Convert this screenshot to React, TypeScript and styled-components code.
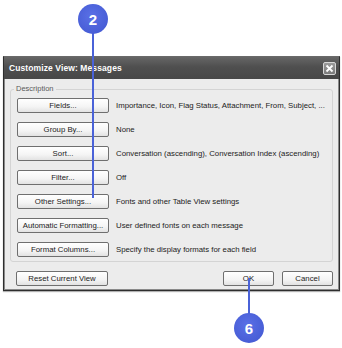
import styled, { createGlobalStyle } from 'styled-components';

const GlobalStyle = createGlobalStyle`
  html, body {
    margin: 0;
    padding: 0;
    background: #fff;
  }
  body {
    font-family: 'Liberation Sans', Arial, sans-serif;
  }
`;

const Page = styled.div`
  position: relative;
  width: 342px;
  height: 348px;
  padding: 56px 2px 0 3px;
  box-sizing: border-box;
  overflow: hidden;
`;

const Dialog = styled.div`
  width: 337px;
  height: 235px;
  box-sizing: border-box;
  border: 1px solid #2e2e2e;
  border-top-color: #6a6a6a;
  background: #ececec;
  display: flex;
  flex-direction: column;
  box-shadow: inset 0 0 0 1px #8a8a8a, 0 1px 1px rgba(0, 0, 0, 0.3);
`;

const TitleBar = styled.div`
  height: 22px;
  display: flex;
  align-items: center;
  justify-content: space-between;
  padding: 0 3px 0 5px;
  background: linear-gradient(#666, #4f4f4f 45%, #474747);
  color: #fff;
`;

const Title = styled.span`
  font-weight: 700;
  font-size: 8.5px;
  letter-spacing: 0.1px;
`;

const CloseBox = styled.div`
  width: 13px;
  height: 13px;
  box-sizing: border-box;
  border: 1px solid #d8d8d8;
  border-radius: 2px;
  background: linear-gradient(#9a9a9a, #7c7c7c);
  display: flex;
  align-items: center;
  justify-content: center;
`;

const Body = styled.div`
  flex: 1;
  display: flex;
  flex-direction: column;
  padding: 10px 6px 0 6px;
`;

const Group = styled.div`
  position: relative;
  height: 173px;
  box-sizing: border-box;
  border: 1px solid #d4d4d4;
  border-radius: 3px;
  padding: 8px 6px 0 6px;
  display: flex;
  flex-direction: column;
  gap: 9px;
`;

const Legend = styled.span`
  position: absolute;
  top: -6px;
  left: 3px;
  padding: 0 2px;
  background: #ececec;
  color: #5a5a5a;
  font-size: 7.5px;
`;

const Row = styled.div`
  display: flex;
  align-items: center;
  gap: 7px;
`;

const Button = styled.div<{ $w?: number }>`
  width: ${(p) => p.$w ?? 92}px;
  height: 15px;
  box-sizing: border-box;
  border: 1px solid #6f6f6f;
  border-radius: 2px;
  background: linear-gradient(#ffffff, #f4f4f4 60%, #e2e2e2);
  display: flex;
  align-items: center;
  justify-content: center;
  font-size: 7.8px;
  color: #222;
  flex-shrink: 0;
`;

const Desc = styled.span`
  font-size: 7.8px;
  color: #222;
  white-space: nowrap;
`;

const Footer = styled.div`
  display: flex;
  align-items: center;
  margin-top: 9px;
  padding-left: 6px;
  gap: 8px;
`;

const Spacer = styled.div`
  flex: 1;
`;

const Leader = styled.div<{ $x: number; $top: number; $h: number }>`
  position: absolute;
  left: ${(p) => p.$x}px;
  top: ${(p) => p.$top}px;
  width: 2px;
  height: ${(p) => p.$h}px;
  background: #4a62d8;
`;

const Bubble = styled.div<{ $cx: number; $cy: number }>`
  position: absolute;
  left: ${(p) => p.$cx - 15}px;
  top: ${(p) => p.$cy - 15}px;
  width: 30px;
  height: 30px;
  border-radius: 50%;
  background: radial-gradient(circle at 45% 40%, #5a70e6, #4056d0);
  color: #fff;
  font-weight: 700;
  font-size: 15px;
  display: flex;
  align-items: center;
  justify-content: center;
`;

const rows = [
  { label: 'Fields...', text: 'Importance, Icon, Flag Status, Attachment, From, Subject, ...' },
  { label: 'Group By...', text: 'None' },
  { label: 'Sort...', text: 'Conversation (ascending), Conversation Index (ascending)' },
  { label: 'Filter...', text: 'Off' },
  { label: 'Other Settings...', text: 'Fonts and other Table View settings' },
  { label: 'Automatic Formatting...', text: 'User defined fonts on each message' },
  { label: 'Format Columns...', text: 'Specify the display formats for each field' },
];

const App = () => {
  return (
    <Page>
      <GlobalStyle />
      <Dialog>
        <TitleBar>
          <Title>Customize View: Messages</Title>
          <CloseBox>
            <svg width="9" height="9" viewBox="0 0 9 9">
              <path d="M1.5 1.5 L7.5 7.5 M7.5 1.5 L1.5 7.5" stroke="#fff" strokeWidth="1.8" />
            </svg>
          </CloseBox>
        </TitleBar>
        <Body>
          <Group>
            <Legend>Description</Legend>
            {rows.map((r) => (
              <Row key={r.label}>
                <Button>{r.label}</Button>
                <Desc>{r.text}</Desc>
              </Row>
            ))}
          </Group>
          <Footer>
            <Button>Reset Current View</Button>
            <Spacer />
            <Button $w={51}>OK</Button>
            <Button $w={51}>Cancel</Button>
          </Footer>
        </Body>
      </Dialog>
      <Leader $x={92} $top={30} $h={168} />
      <Bubble $cx={93} $cy={19}>2</Bubble>
      <Leader $x={248} $top={278} $h={40} />
      <Bubble $cx={249} $cy={328}>6</Bubble>
    </Page>
  );
};

export default App;
